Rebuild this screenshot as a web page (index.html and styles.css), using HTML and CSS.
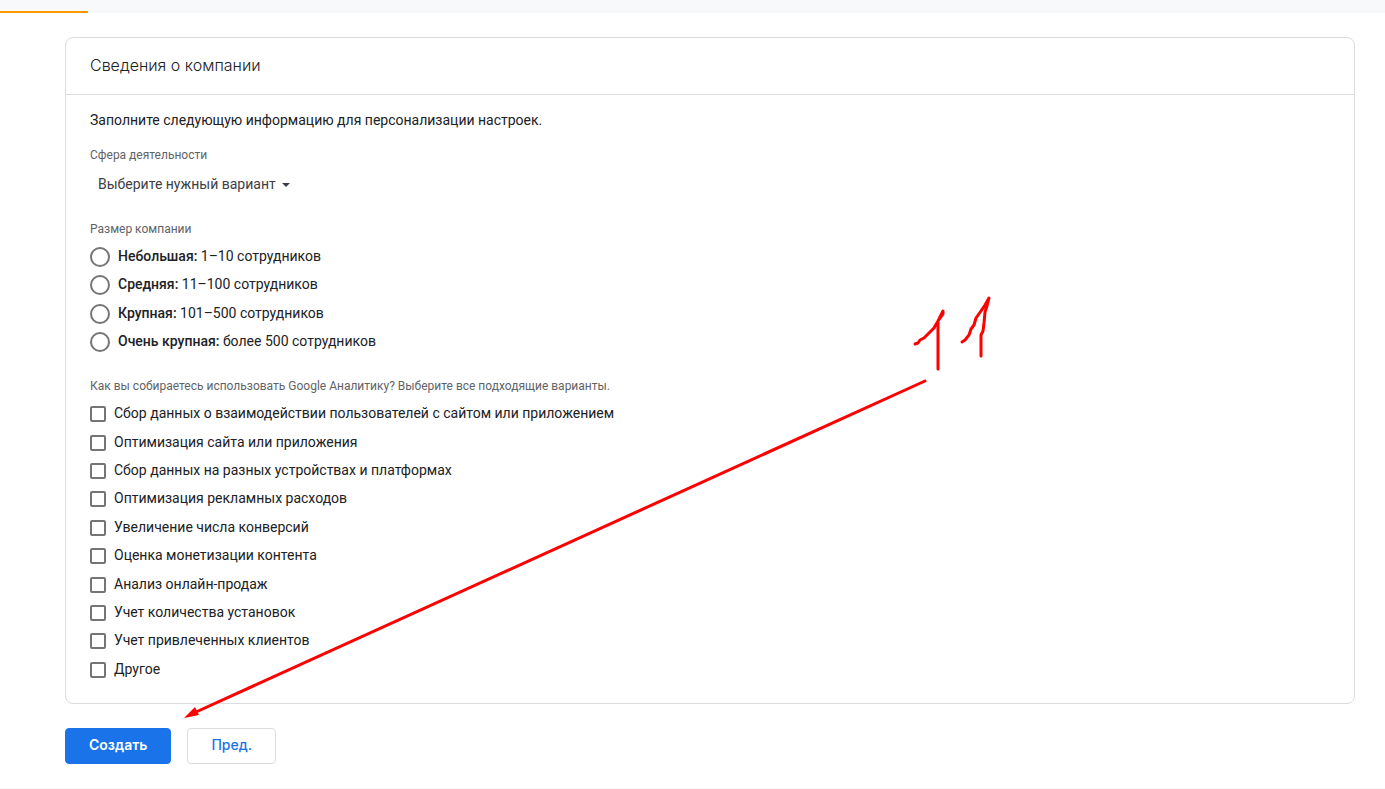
FILE: index.html
```html
<!DOCTYPE html>
<html lang="ru">
<head>
<meta charset="utf-8">
<meta name="viewport" content="width=device-width, initial-scale=1">
<title>Сведения о компании</title>
<link rel="stylesheet" href="styles.css">
</head>
<body>
<div class="tabs"><div class="tab-indicator"></div></div>
<main class="page">
  <form class="form">
    <section class="card">
      <h1 class="card-title">Сведения о компании</h1>
      <div class="card-body">
        <p class="intro">Заполните следующую информацию для персонализации настроек.</p>
        <label class="caption" for="industry">Сфера деятельности</label>
        <div class="select-wrap">
          <select class="select" id="industry"><option>Выберите нужный вариант</option></select>
          <svg class="caret" viewBox="0 0 8 4" aria-hidden="true"><path d="M0 0h8L4 4z" fill="currentColor"/></svg>
        </div>
        <fieldset class="group">
          <legend class="caption">Размер компании</legend>
          <div class="options sizes">
            <label class="option"><input class="radio" type="radio" name="size"><span><b>Небольшая:</b> 1–10 сотрудников</span></label>
            <label class="option"><input class="radio" type="radio" name="size"><span><b>Средняя:</b> 11–100 сотрудников</span></label>
            <label class="option"><input class="radio" type="radio" name="size"><span><b>Крупная:</b> 101–500 сотрудников</span></label>
            <label class="option"><input class="radio" type="radio" name="size"><span><b>Очень крупная:</b> более 500 сотрудников</span></label>
          </div>
        </fieldset>
        <fieldset class="group">
          <legend class="caption">Как вы собираетесь использовать Google Аналитику? Выберите все подходящие варианты.</legend>
          <div class="options goals">
            <label class="option"><input class="check" type="checkbox"><span>Сбор данных о взаимодействии пользователей с сайтом или приложением</span></label>
            <label class="option"><input class="check" type="checkbox"><span>Оптимизация сайта или приложения</span></label>
            <label class="option"><input class="check" type="checkbox"><span>Сбор данных на разных устройствах и платформах</span></label>
            <label class="option"><input class="check" type="checkbox"><span>Оптимизация рекламных расходов</span></label>
            <label class="option"><input class="check" type="checkbox"><span>Увеличение числа конверсий</span></label>
            <label class="option"><input class="check" type="checkbox"><span>Оценка монетизации контента</span></label>
            <label class="option"><input class="check" type="checkbox"><span>Анализ онлайн-продаж</span></label>
            <label class="option"><input class="check" type="checkbox"><span>Учет количества установок</span></label>
            <label class="option"><input class="check" type="checkbox"><span>Учет привлеченных клиентов</span></label>
            <label class="option"><input class="check" type="checkbox"><span>Другое</span></label>
          </div>
        </fieldset>
      </div>
    </section>
    <div class="actions">
      <button class="button primary" type="button">Создать</button>
      <button class="button secondary" type="button">Пред.</button>
    </div>
  </form>
</main>
<div class="footer-line"></div>
<svg class="annotation" width="820" height="430" viewBox="180 292 820 430" aria-hidden="true">
  <g fill="none" stroke="#f00" stroke-width="3" stroke-linecap="round" stroke-linejoin="round">
    <path d="M925 381L196 712"/>
    <path d="M915 344L918 343L920 340L924 338L930 332L934 328L938 321L941 315L943 311L943 314L938 321V369"/>
    <path d="M962 342L965 340L969 335L971 329L974 325L976 318L981 311L985 305L989 298L987 306L985 312L984 323L983 331L981 335V356"/>
  </g>
  <path d="M184 718L195 707L199 715z" fill="#f00"/>
</svg>
</body>
</html>
```
FILE: styles.css
```css
* { box-sizing: border-box; }
body {
  position: relative;
  margin: 0;
  background: #fff;
  color: #202124;
  font: 14px/20px Roboto, "Liberation Sans", sans-serif;
}
.tabs {
  display: flex;
  align-items: flex-end;
  height: 13px;
  background: #f8f9fb;
}
.tab-indicator { width: 88px; height: 2px; background: #f90; }
.page { padding: 24px 30px 24px 65px; }
.card { border: 1px solid #dadce0; border-radius: 8px; }
.card-title {
  margin: 0;
  padding: 15px 24px 17px;
  border-bottom: 1px solid #dadce0;
  color: #202124;
  font: 300 16px/24px Inter, sans-serif;
}
.card-body { padding: 15px 24px 20px; }
.intro { margin: 0 0 17px; }
.caption {
  display: block;
  padding: 0;
  color: #5f6368;
  font-size: 12px;
  line-height: 16px;
}
.select-wrap {
  display: flex;
  align-items: center;
  gap: 6px;
  margin: 11px 0 27px;
  padding-left: 8px;
  color: #3c4043;
}
.select {
  appearance: none;
  field-sizing: content;
  margin: 0;
  padding: 0;
  border: 0;
  background: none;
  color: inherit;
  font: inherit;
}
.caret { width: 8px; height: 4px; margin-top: 2px; }
.group { min-width: 0; margin: 0 0 23px; padding: 0; border: 0; }
.group:last-child { margin-bottom: 0; }
.options {
  display: grid;
  grid-auto-rows: 1fr;
  padding-top: 5px;
}
.sizes { min-height: 118px; }
.goals { min-height: 289px; }
.option { display: flex; align-items: center; gap: 8px; }
.option b { font-weight: 500; }
.radio, .check {
  appearance: none;
  flex: none;
  margin: 2px 0 0;
  border: 2px solid #757575;
  background: #fff;
}
.radio { width: 20px; height: 20px; border-radius: 50%; }
.check { width: 16px; height: 16px; border-radius: 2px; }
.actions { display: flex; gap: 16px; padding-top: 24px; }
.button {
  height: 36px;
  padding: 0 23px 2px;
  border: 1px solid #dadce0;
  border-radius: 4px;
  background: #fff;
  color: #1a73e8;
  font: 500 14px/20px Inter, sans-serif;
}
.primary { border-color: #1a73e8; background: #1a73e8; color: #fff; font-weight: 600; }
.footer-line { height: 1px; background: #f8f8f8; }
.annotation { position: absolute; top: 292px; left: 180px; pointer-events: none; }
```
